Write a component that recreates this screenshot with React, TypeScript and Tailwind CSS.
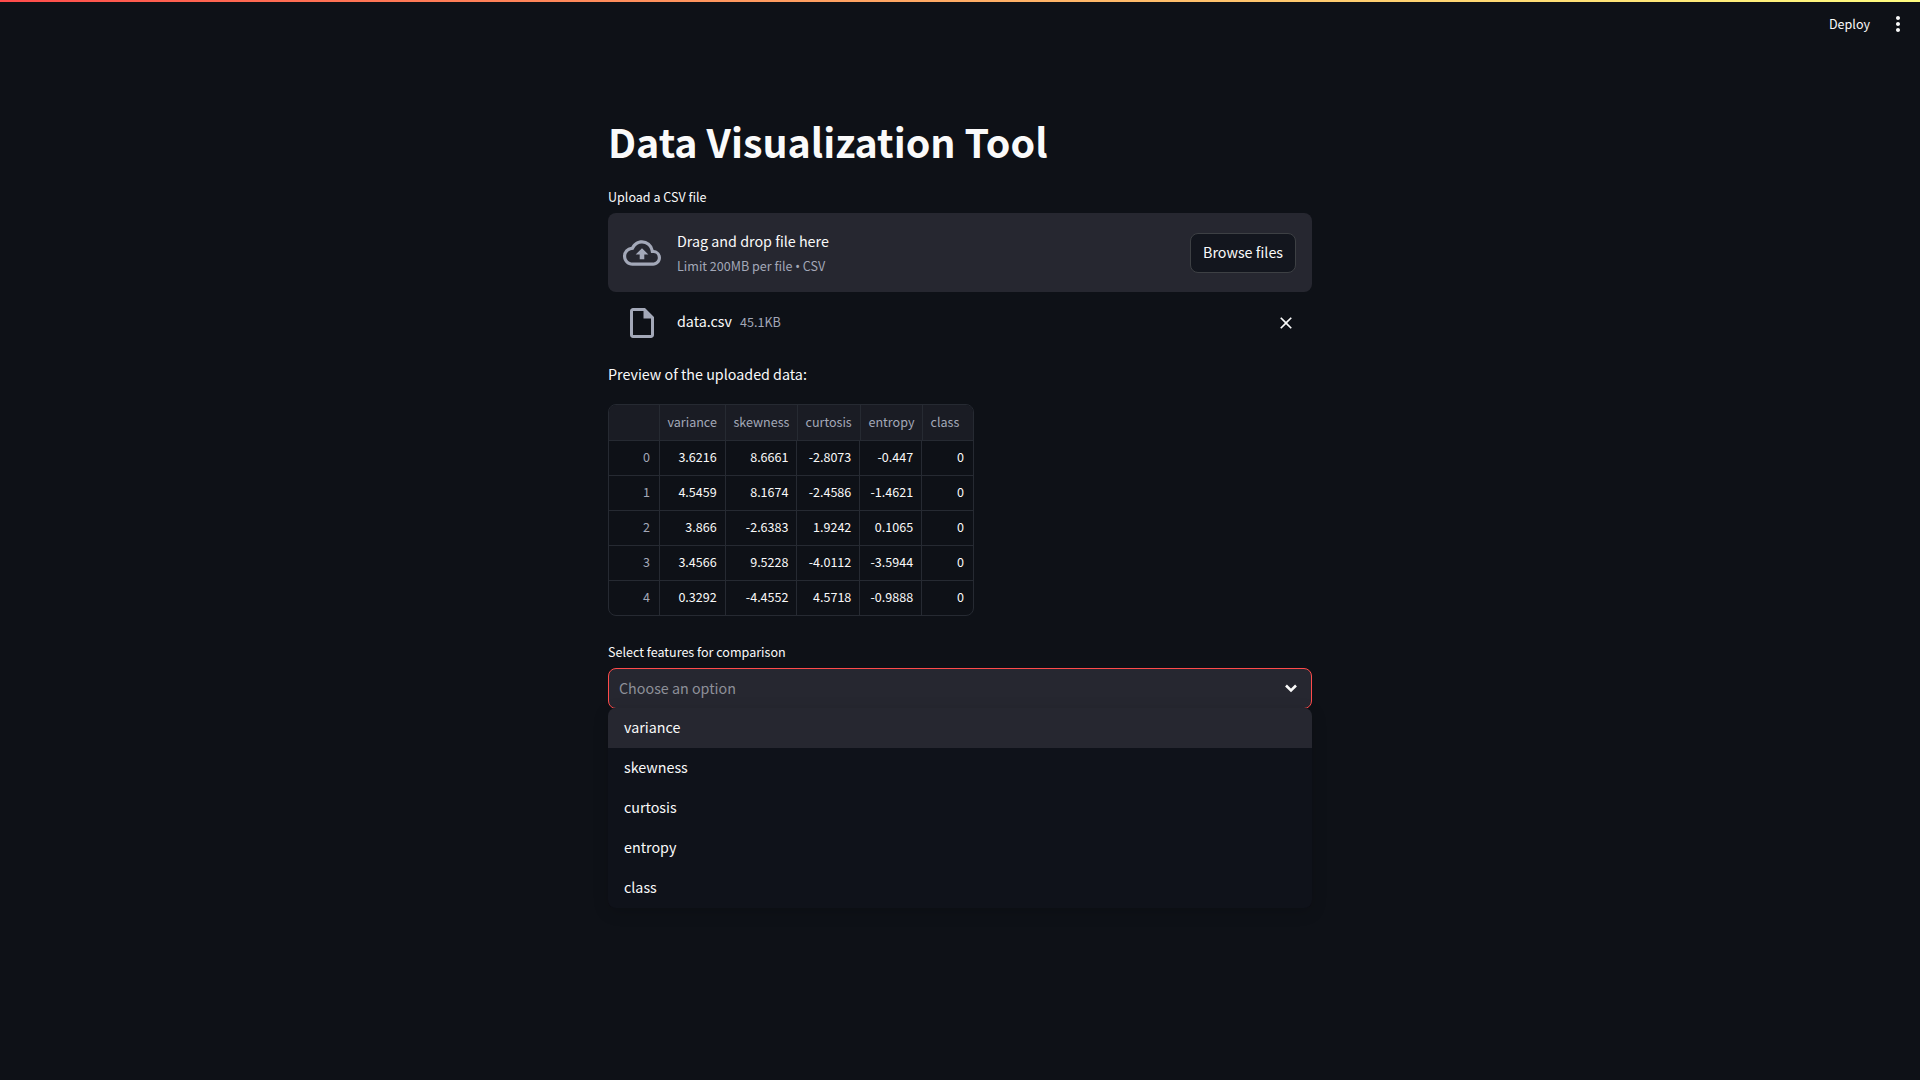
import React from "react";
import { MdOutlineCloudUpload, MdOutlineInsertDriveFile, MdClose, MdMoreVert } from "react-icons/md";

const font = "[font-family:'Noto_Sans_CJK_SC','Noto_Sans',sans-serif]";

const columns = ["variance", "skewness", "curtosis", "entropy", "class"];
const rows = [
  ["0", "3.6216", "8.6661", "-2.8073", "-0.447", "0"],
  ["1", "4.5459", "8.1674", "-2.4586", "-1.4621", "0"],
  ["2", "3.866", "-2.6383", "1.9242", "0.1065", "0"],
  ["3", "3.4566", "9.5228", "-4.0112", "-3.5944", "0"],
  ["4", "0.3292", "-4.4552", "4.5718", "-0.9888", "0"],
];
const widths = ["w-[50px]", "w-[66px]", "w-[72px]", "w-[63px]", "w-[62px]", "w-[52px]"];
const options = ["variance", "skewness", "curtosis", "entropy", "class"];

export default function App() {
  return (
    <div className={`${font} min-h-[1080px] bg-[#0e1117] text-[#fafafa] flex flex-col`}>
      <div className="h-0.5 bg-gradient-to-r from-[#ff4b4b] to-[#fffd80]" />
      <header className="h-[44px] flex items-center justify-end pr-[10px] gap-[16px]">
        <span className="text-[12.55px] leading-5">Deploy</span>
        <MdMoreVert className="w-6 h-6" />
      </header>
      <main className="w-[704px] mx-auto flex flex-col">
        <h1 className="mt-[69px] text-[39.4px] leading-[52px] font-bold tracking-normal">Data Visualization Tool</h1>
        <label className="mt-[20px] text-[12.55px] leading-5">Upload a CSV file</label>
        <section className="mt-[6px] h-[79px] rounded-lg bg-[#262730] flex items-center pl-4 pr-4">
          <MdOutlineCloudUpload className="w-[38px] h-[38px] text-[#a3a8b8] -ml-px" />
          <div className="ml-[16px] flex-1 flex flex-col">
            <span className="text-[14.3px] leading-6">Drag and drop file here</span>
            <span className="text-[12.55px] leading-5 mt-[3px] -mb-px text-[#a3a8b8]">
              Limit 200MB per file <span className="[font-family:'Noto_Sans',sans-serif]">•</span> CSV
            </span>
          </div>
          <button className="h-[40px] px-3 pb-0.5 rounded-lg border border-[#3d4044] bg-[#13161e] text-[14.3px] leading-6">Browse files</button>
        </section>
        <section className="mt-[7px] h-[48px] flex items-center pl-4 pr-[16px]">
          <MdOutlineInsertDriveFile className="w-[36px] h-[36px] text-[#a3a8b8]" />
          <div className="ml-[17px] flex-1 flex items-baseline -mt-[4px]">
            <span className="text-[14.3px] leading-6">data.csv</span>
            <span className="ml-2 text-[12.55px] leading-5 text-[#a3a8b8]">45.1KB</span>
          </div>
          <MdClose className="w-5 h-5" />
        </section>
        <p className="mt-[15px] text-[14.3px] leading-6">Preview of the uploaded data:</p>
        <div className="mt-[18px] w-[366px] rounded-lg border border-[#262a32] overflow-hidden text-[12.55px]">
          <div className="flex h-[35px] bg-[#1a1c24] text-[#a3a8b8]">
            {["", ...columns].map((c, i) => (
              <div
                key={i}
                className={`${widths[i]} flex items-center px-2 ${i > 0 ? "border-l border-[#262a32]" : ""}`}
              >
                {c}
              </div>
            ))}
          </div>
          {rows.map((r) => (
            <div key={r[0]} className="flex h-[35px] border-t border-[#262a32]">
              {r.map((v, i) => (
                <div
                  key={i}
                  className={`${widths[i]} flex items-center justify-end pl-2 pb-px ${i === 0 || i === 5 ? "pr-[9px]" : "pr-2"} ${i > 0 ? "border-l border-[#262a32]" : "text-[#a3a8b8]"}`}
                >
                  {v}
                </div>
              ))}
            </div>
          ))}
        </div>
        <label className="mt-[26px] text-[12.55px] leading-5">Select features for comparison</label>
        <div className="relative mt-[6px]">
          <div className="h-[41px] rounded-lg border border-[#ff4b4b] bg-[#262730] flex items-center pl-[10px] pr-[10px] pb-px">
            <span className="flex-1 text-[14.3px] leading-6 text-[#8e9099]">Choose an option</span>
            <svg viewBox="0 0 20 20" className="w-5 h-5" fill="none" stroke="currentColor" strokeWidth="2.6">
              <path d="M5 7.5l5 5 5-5" />
            </svg>
          </div>
          <ul className="absolute left-0 right-0 top-[40px] rounded-lg overflow-hidden bg-[#0e1117] shadow-[0_4px_16px_rgba(0,0,0,0.16)]">
            {options.map((o, i) => (
              <li key={o} className={`h-10 flex items-center px-4 pb-0.5 text-[14.3px] leading-6 ${i === 0 ? "bg-[#262730]" : "bg-[#0f121a]"}`}>
                {o}
              </li>
            ))}
          </ul>
        </div>
      </main>
    </div>
  );
}
